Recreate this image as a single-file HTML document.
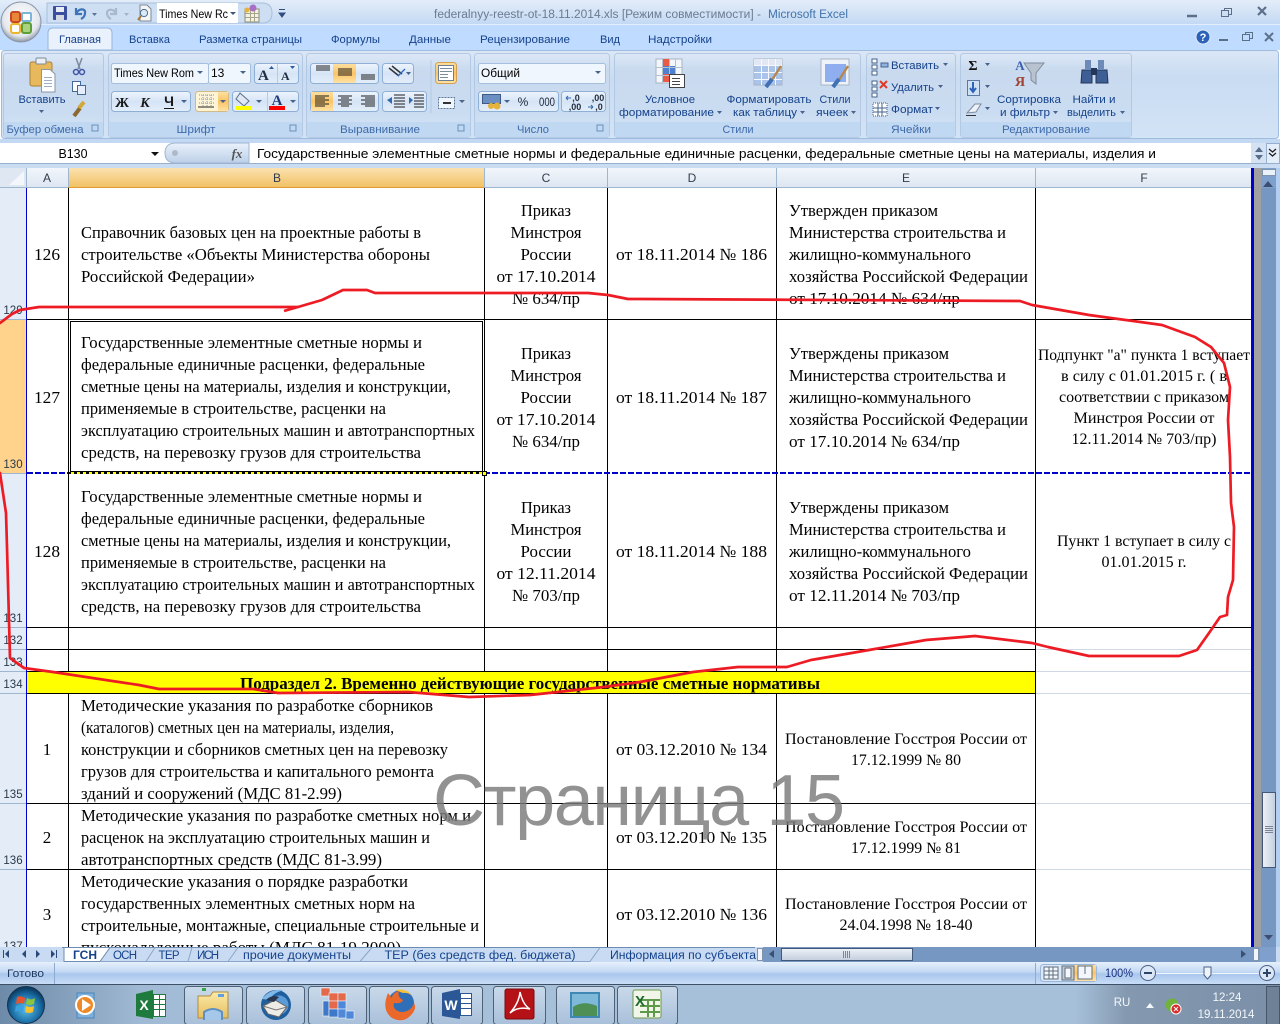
<!DOCTYPE html>
<html><head><meta charset="utf-8"><style>
html,body{margin:0;padding:0;background:#fff;width:1280px;height:1024px;overflow:hidden}
svg{display:block}
.c{font:17px "Liberation Serif","Noto Serif CJK SC",serif;fill:#000}
.s{font-size:15.5px}
.m{text-anchor:middle}
.u{font:11px "Liberation Sans","Noto Sans CJK SC",sans-serif;fill:#15428b}
.g{font:11px "Liberation Sans",sans-serif;fill:#3e6aaa;text-anchor:middle}
.h{font:12px "Liberation Sans",sans-serif;fill:#303c4c;text-anchor:middle}
.r{font:11.5px "Liberation Sans",sans-serif;fill:#2a3a4a;text-anchor:middle}
.w{font:11.5px "Liberation Sans",sans-serif;fill:#f4f7fb;text-anchor:middle}
</style></head><body>
<svg width="1280" height="1024" viewBox="0 0 1280 1024" xmlns="http://www.w3.org/2000/svg">
<defs>
<linearGradient id="tb" x1="0" y1="0" x2="0" y2="1"><stop offset="0" stop-color="#e3edf9"/><stop offset=".5" stop-color="#d3e3f6"/><stop offset="1" stop-color="#c2d8f3"/></linearGradient>
<linearGradient id="pn" x1="0" y1="0" x2="0" y2="1"><stop offset="0" stop-color="#dbe7f6"/><stop offset=".3" stop-color="#c9dcf2"/><stop offset="1" stop-color="#d3e3f6"/></linearGradient>
<linearGradient id="gp" x1="0" y1="0" x2="0" y2="1"><stop offset="0" stop-color="#dce8f7"/><stop offset=".2" stop-color="#c9daef"/><stop offset=".7" stop-color="#cadcf1"/><stop offset="1" stop-color="#d6e5f7"/></linearGradient>
<linearGradient id="bt" x1="0" y1="0" x2="0" y2="1"><stop offset="0" stop-color="#eef5fd"/><stop offset=".5" stop-color="#d5e4f6"/><stop offset="1" stop-color="#e4eefa"/></linearGradient>
<linearGradient id="or" x1="0" y1="0" x2="0" y2="1"><stop offset="0" stop-color="#fddf9f"/><stop offset=".5" stop-color="#fbc464"/><stop offset="1" stop-color="#fee3a6"/></linearGradient>
<linearGradient id="hd" x1="0" y1="0" x2="0" y2="1"><stop offset="0" stop-color="#f2f6fb"/><stop offset="1" stop-color="#dde6f2"/></linearGradient>
<linearGradient id="hs" x1="0" y1="0" x2="0" y2="1"><stop offset="0" stop-color="#fbe2b0"/><stop offset="1" stop-color="#f2c165"/></linearGradient>
<linearGradient id="st" x1="0" y1="0" x2="0" y2="1"><stop offset="0" stop-color="#e6f0fc"/><stop offset=".45" stop-color="#c3d9f5"/><stop offset=".55" stop-color="#a9c6ec"/><stop offset="1" stop-color="#c9def7"/></linearGradient>
<linearGradient id="tk" x1="0" y1="0" x2="1" y2="0"><stop offset="0" stop-color="#6d8aa8"/><stop offset=".11" stop-color="#a0b9d4"/><stop offset=".2" stop-color="#a7c0da"/><stop offset=".84" stop-color="#a7c0da"/><stop offset=".88" stop-color="#8499b0"/><stop offset="1" stop-color="#7b90a8"/></linearGradient>
<linearGradient id="tbn" x1="0" y1="0" x2="0" y2="1"><stop offset="0" stop-color="#c9d9ea"/><stop offset="1" stop-color="#a9c0da"/></linearGradient>
<linearGradient id="thm" x1="0" y1="0" x2="0" y2="1"><stop offset="0" stop-color="#eef2f7"/><stop offset="1" stop-color="#c2cede"/></linearGradient>
<linearGradient id="thv" x1="0" y1="0" x2="1" y2="0"><stop offset="0" stop-color="#eef2f7"/><stop offset="1" stop-color="#c2cede"/></linearGradient>
<radialGradient id="orb" cx=".5" cy=".6" r=".55"><stop offset="0" stop-color="#5fc0e8"/><stop offset=".7" stop-color="#1a6ea6"/><stop offset="1" stop-color="#0c3e66"/></radialGradient>
<radialGradient id="off" cx=".5" cy=".4" r=".6"><stop offset="0" stop-color="#ffffff"/><stop offset=".75" stop-color="#e4e8ee"/><stop offset="1" stop-color="#8d97a6"/></radialGradient>
<linearGradient id="fx" x1="0" y1="0" x2="0" y2="1"><stop offset="0" stop-color="#e9f1fb"/><stop offset="1" stop-color="#bdd0e8"/></linearGradient>
<linearGradient id="fold" x1="0" y1="0" x2="0" y2="1"><stop offset="0" stop-color="#fbeaa6"/><stop offset="1" stop-color="#e6bf62"/></linearGradient>
</defs>

<!-- TITLE BAR -->
<rect width="1280" height="25" fill="url(#tb)"/>
<rect y="25" width="1280" height="25" fill="#bfdbff"/>
<rect y="24" width="1280" height="1" fill="#e4eefb"/>
<path d="M47 3H262Q272 3 272 13Q272 23 262 23H47Z" fill="#cfdff3" stroke="#a7bfdc"/>
<rect x="157" y="3" width="81" height="20" fill="#fff"/>
<circle cx="21" cy="22" r="20" fill="url(#off)" stroke="#8a95a6"/>
<rect x="11" y="12" width="9" height="10" rx="2" fill="#e8873a" stroke="#c9481f" stroke-width="2"/>
<rect x="22" y="13" width="9" height="8" rx="1" fill="#fff" stroke="#7bb5d8" stroke-width="2"/>
<rect x="11" y="24" width="9" height="9" rx="2" fill="#fff" stroke="#eeb42c" stroke-width="2"/>
<rect x="22" y="23" width="9" height="10" rx="2" fill="#a9d37c" stroke="#5e9e3a" stroke-width="2"/>
<!-- QAT -->
<rect x="53" y="6" width="14" height="14" rx="1" fill="#3b4f9e"/><rect x="56" y="7" width="8" height="5" fill="#e8eef8"/><rect x="56" y="15" width="8" height="5" fill="#d4d8e0"/>
<path d="M76 8V14H82M76 14C78 8 86 8 85 13C85 16 83 18 81 19" fill="none" stroke="#3d73b8" stroke-width="2.200"/>
<polygon points="92,13 97,13 94.500,16" fill="#5a7396"/>
<path d="M116 8V14H110M116 14C114 8 107 9 107 13C107 16 109 18 111 19" fill="none" stroke="#a9b8cb" stroke-width="2.200"/>
<polygon points="124,13 129,13 126.500,16" fill="#a3b3c7"/>
<path d="M140 5H147L151 9V21H140Z" fill="#f6f6f4" stroke="#7d8a9a"/><circle cx="144" cy="13" r="3.600" fill="#d9eaf8" stroke="#4f6d90"/><path d="M141 16L138 20" stroke="#a87b3b" stroke-width="2"/>
<text x="159" y="18" class="u" style="fill:#000;font-size:12px" textLength="69" lengthAdjust="spacingAndGlyphs">Times New Rc</text>
<polygon points="230,12 236,12 233,15" fill="#3c5879"/>
<rect x="245" y="9" width="14" height="13" fill="#f4f1e4" stroke="#8a8d76"/><path d="M245.500 13.500H259M245.500 17.500H259M250.500 9V22M254.500 9V22" stroke="#a5a58a"/><circle cx="253" cy="8" r="3.500" fill="#a86fc4"/><circle cx="247" cy="10" r="2.500" fill="#e6b23c"/>
<path d="M279 9.500H285M279 13L285 13 282 17Z" stroke="#2f4f7f" fill="#2f4f7f"/>
<text x="434" y="18" class="u" style="fill:#6a7b92;font-size:11.500px" textLength="327" lengthAdjust="spacingAndGlyphs">federalnyy-reestr-ot-18.11.2014.xls  [Режим совместимости] -</text>
<text x="768" y="18" class="u" style="fill:#3f73ad;font-size:11.500px" textLength="80" lengthAdjust="spacingAndGlyphs">Microsoft Excel</text>
<path d="M1187 16H1197" stroke="#5c6f89" stroke-width="2.500"/>
<rect x="1224.500" y="8.500" width="7" height="6" fill="none" stroke="#5c6f89"/><rect x="1221.500" y="10.500" width="7" height="6" fill="#cfdff3" stroke="#5c6f89"/>
<path d="M1258 7L1266 15M1266 7L1258 15" stroke="#5c6f89" stroke-width="2.200"/>
<!-- TABS -->
<path d="M48 50V33Q48 28 53 28H107Q112 28 112 33V50Z" fill="#e8f1fc" stroke="#98b5d9"/>
<text x="59" y="43" class="u" textLength="42" lengthAdjust="spacingAndGlyphs">Главная</text>
<text x="129" y="43" class="u" textLength="41" lengthAdjust="spacingAndGlyphs">Вставка</text>
<text x="199" y="43" class="u" textLength="103" lengthAdjust="spacingAndGlyphs">Разметка страницы</text>
<text x="331" y="43" class="u" textLength="49" lengthAdjust="spacingAndGlyphs">Формулы</text>
<text x="409" y="43" class="u" textLength="42" lengthAdjust="spacingAndGlyphs">Данные</text>
<text x="480" y="43" class="u" textLength="90" lengthAdjust="spacingAndGlyphs">Рецензирование</text>
<text x="600" y="43" class="u" textLength="20" lengthAdjust="spacingAndGlyphs">Вид</text>
<text x="648" y="43" class="u" textLength="64" lengthAdjust="spacingAndGlyphs">Надстройки</text>
<circle cx="1203" cy="37" r="7" fill="#2c62b8" stroke="#dfeafa"/><text x="1203" y="41" class="u" style="fill:#fff;font-weight:bold;text-anchor:middle">?</text>
<path d="M1219 40H1228" stroke="#5c6f89" stroke-width="2"/>
<rect x="1245.500" y="32.500" width="7" height="6" fill="none" stroke="#5c6f89"/><rect x="1242.500" y="34.500" width="7" height="6" fill="#bfdbff" stroke="#5c6f89"/>
<path d="M1265 33L1273 41M1273 33L1265 41" stroke="#5c6f89" stroke-width="2"/>
<!-- RIBBON -->
<rect x="1.500" y="50.500" width="1277" height="88" rx="3" fill="url(#pn)" stroke="#9fbcdf"/>
<rect x="0" y="139" width="1280" height="4" fill="#c2d8f3"/>
<g fill="url(#gp)" stroke="#b3c9e3">
<rect x="3.500" y="53.500" width="100" height="84" rx="3"/><rect x="108.500" y="53.500" width="194" height="84" rx="3"/><rect x="306.500" y="53.500" width="164" height="84" rx="3"/><rect x="474.500" y="53.500" width="135" height="84" rx="3"/><rect x="614.500" y="53.500" width="246" height="84" rx="3"/><rect x="866.500" y="53.500" width="89" height="84" rx="3"/><rect x="960.500" y="53.500" width="171" height="84" rx="3"/>
</g>
<g fill="#c1d8f2">
<rect x="4" y="122" width="99" height="15"/><rect x="109" y="122" width="193" height="15"/><rect x="307" y="122" width="163" height="15"/><rect x="475" y="122" width="134" height="15"/><rect x="615" y="122" width="245" height="15"/><rect x="867" y="122" width="88" height="15"/><rect x="961" y="122" width="170" height="15"/>
</g>
<text x="45" y="133" class="g" textLength="77" lengthAdjust="spacingAndGlyphs">Буфер обмена</text>
<text x="196" y="133" class="g" textLength="39" lengthAdjust="spacingAndGlyphs">Шрифт</text>
<text x="380" y="133" class="g" textLength="80" lengthAdjust="spacingAndGlyphs">Выравнивание</text>
<text x="533" y="133" class="g" textLength="32" lengthAdjust="spacingAndGlyphs">Число</text>
<text x="738" y="133" class="g" textLength="31" lengthAdjust="spacingAndGlyphs">Стили</text>
<text x="911" y="133" class="g" textLength="40" lengthAdjust="spacingAndGlyphs">Ячейки</text>
<text x="1046" y="133" class="g" textLength="88" lengthAdjust="spacingAndGlyphs">Редактирование</text>
<g fill="none" stroke="#6b8fb8" shape-rendering="crispEdges"><rect x="92" y="125" width="6" height="6"/><rect x="290" y="125" width="6" height="6"/><rect x="458" y="125" width="6" height="6"/><rect x="597" y="125" width="6" height="6"/></g>
<!-- clipboard -->
<rect x="30" y="62" width="22" height="24" rx="2" fill="#e8b85c" stroke="#a98238"/><rect x="36" y="58" width="10" height="6" rx="1" fill="#eceff3" stroke="#7d8a9a"/>
<path d="M41.500 69.500H50L55 74V92H41.500Z" fill="#fff" stroke="#8896a8"/><path d="M44 77.500H52M44 80.500H52M44 83.500H52M44 86.500H52" stroke="#9cb0c6"/>
<text x="42" y="103" class="u m" textLength="47" lengthAdjust="spacingAndGlyphs">Вставить</text>
<polygon points="39,110 44,110 41.500,113" fill="#47638b"/>
<path d="M76 58L80 69M82 58L78 69" stroke="#7a8ba0" stroke-width="1.500"/><circle cx="76" cy="72" r="2.500" fill="none" stroke="#3c55a8" stroke-width="1.500"/><circle cx="82" cy="72" r="2.500" fill="none" stroke="#3c55a8" stroke-width="1.500"/>
<rect x="72.500" y="81.500" width="8" height="10" fill="#fff" stroke="#46699c"/><rect x="77.500" y="85.500" width="8" height="9" fill="#e6eefb" stroke="#46699c"/>
<path d="M74 116L80 108" stroke="#8c6a32" stroke-width="4"/><path d="M79 108L84 102" stroke="#d2a83a" stroke-width="4"/>
<!-- control boxes -->
<g fill="url(#bt)" stroke="#8fb0d6">
<rect x="111.500" y="63.500" width="97" height="20" rx="2" fill="#f0f6fd" stroke="#a6bfdc"/><rect x="208.500" y="63.500" width="42" height="20" rx="2" fill="#f0f6fd" stroke="#a6bfdc"/><rect x="254.500" y="63.500" width="44" height="20" rx="3"/>
<rect x="111.500" y="91.500" width="79" height="20" rx="3"/><rect x="232.500" y="91.500" width="66" height="20" rx="3"/>
<rect x="310.500" y="63.500" width="68" height="20" rx="3"/><rect x="382.500" y="63.500" width="31" height="20" rx="3"/><rect x="310.500" y="91.500" width="68" height="20" rx="3"/><rect x="382.500" y="91.500" width="44" height="20" rx="3"/>
<rect x="478.500" y="63.500" width="127" height="20" rx="2" fill="#f0f6fd" stroke="#a6bfdc"/><rect x="478.500" y="91.500" width="80" height="20" rx="3"/><rect x="561.500" y="91.500" width="44" height="20" rx="3"/>
</g>
<text x="114" y="77" class="u" style="fill:#000;font-size:12px" textLength="80" lengthAdjust="spacingAndGlyphs">Times New Rom</text>
<polygon points="197,71 203,71 200,74" fill="#47638b"/>
<text x="211" y="77" class="u" style="fill:#000;font-size:12px">13</text>
<polygon points="240,71 246,71 243,74" fill="#47638b"/>
<text x="258" y="80" style="font:bold 15px 'Liberation Serif',serif;fill:#1e2d44">A</text><polygon points="269,69 274,69 271.500,66" fill="#2b5ba2"/>
<text x="281" y="80" style="font:bold 12px 'Liberation Serif',serif;fill:#1e2d44">A</text><polygon points="290,66 295,66 292.500,69" fill="#2b5ba2"/>
<path d="M277.500 64V83" stroke="#b5cae3"/>
<text x="122" y="107" class="m" style="font:bold 14px 'Liberation Serif',serif;fill:#1a1a1a">Ж</text>
<text x="145" y="107" class="m" style="font:italic bold 14px 'Liberation Serif',serif;fill:#1a1a1a">К</text>
<text x="169" y="106" class="m" style="font:bold 14px 'Liberation Sans',sans-serif;fill:#1a1a1a">Ч</text>
<path d="M164 108.500H174" stroke="#1a1a1a"/>
<polygon points="181,100 187,100 184,103" fill="#47638b"/>
<rect x="195.500" y="91.500" width="33" height="20" rx="3" fill="#fff4d6" stroke="#d2ba86"/><rect x="218" y="92" width="10" height="19" fill="url(#or)"/>
<g shape-rendering="crispEdges"><path d="M199 95H214M199 99H214M199 103H214M203 95V107M207 95V107M211 95V107" stroke="#8a96a6" stroke-dasharray="1 1"/><path d="M198 107H214" stroke="#222"/></g>
<polygon points="220,100 226,100 223,103" fill="#47638b"/>
<path d="M240 93L249 101L244 106L236 99Z" fill="#dfe7f2" stroke="#5b6f8a"/>
<rect x="236" y="106" width="16" height="4" fill="#ffff00"/>
<polygon points="256,100 262,100 259,103" fill="#47638b"/>
<text x="277" y="105" class="m" style="font:bold 15px 'Liberation Serif',serif;fill:#1f3a7a">A</text>
<rect x="269" y="106" width="16" height="4" fill="#ff0000"/>
<polygon points="290,100 296,100 293,103" fill="#47638b"/>
<path d="M267.500 92V111" stroke="#b5cae3"/>
<!-- align -->
<rect x="333" y="64" width="23" height="19" fill="url(#or)"/>
<rect x="311" y="92" width="22" height="19" fill="url(#or)"/>
<g stroke="#1e1e1e" shape-rendering="crispEdges">
<path d="M316 66H330M316 68H330M316 70H330"/>
<path d="M338 69H352M338 71H352M338 73H352M338 75H352"/>
<path d="M361 75H375M361 77H375M361 79H375"/>
<path d="M315 96H329M315 98H325M315 100H329M315 102H325M315 104H329M315 106H325"/>
<path d="M338 96H352M341 98H349M338 100H352M341 102H349M338 104H352M341 106H349"/>
<path d="M361 96H375M365 98H375M361 100H375M365 102H375M361 104H375M365 106H375"/>
<path d="M394 95H405M394 98H405M394 101H405M394 104H405M394 107H405"/>
<path d="M414 95H424M414 98H424M414 101H424M414 104H424M414 107H424"/>
</g>
<path d="M389 68L399 76M392 66L402 74" stroke="#333" stroke-width="1.500"/><path d="M398 76L405 69" stroke="#2e6bc0" stroke-width="1.300"/>
<polygon points="406,72 411,72 408.500,75" fill="#47638b"/>
<path d="M387 100L392 97V104ZM409 97L413 100 409 104Z" fill="#3568ad"/>
<path d="M431 60V113" stroke="#b3c9e3"/>
<rect x="435.500" y="62.500" width="21" height="21" rx="3" fill="url(#or)" stroke="#d2a04f"/><rect x="438.500" y="65.500" width="15" height="15" fill="#fff" stroke="#6d7f94"/><path d="M440 68.500H452M440 71.500H452M440 74.500H448M440 77.500H448" stroke="#7d8a9a"/>
<rect x="438.500" y="97.500" width="16" height="11" fill="#f0f6fd" stroke="#5e7897" stroke-dasharray="2 1"/><path d="M443 103H451" stroke="#333" stroke-width="2"/>
<polygon points="459,100 465,100 462,103" fill="#47638b"/>
<!-- number -->
<text x="481" y="77" class="u" style="fill:#000;font-size:12px" textLength="39" lengthAdjust="spacingAndGlyphs">Общий</text>
<polygon points="595,71 601,71 598,74" fill="#47638b"/>
<rect x="482.500" y="94.500" width="18" height="9" fill="#6a8fc0" stroke="#3d5a88"/><circle cx="497" cy="106" r="3.500" fill="#e5b23c"/><circle cx="491" cy="106" r="3" fill="#e5b23c"/>
<polygon points="504,100 510,100 507,103" fill="#47638b"/>
<text x="523" y="106" class="m" style="font:12px 'Liberation Sans',sans-serif;fill:#1f2a3a">%</text>
<text x="547" y="106" class="m" style="font:12px 'Liberation Sans',sans-serif;fill:#1f2a3a" textLength="16" lengthAdjust="spacingAndGlyphs">000</text>
<text x="576" y="101" class="m" style="font:bold 9px 'Liberation Sans',sans-serif;fill:#1f2a3a">,0</text><text x="575" y="110" class="m" style="font:bold 9px 'Liberation Sans',sans-serif;fill:#1f2a3a">,00</text>
<text x="598" y="101" class="m" style="font:bold 9px 'Liberation Sans',sans-serif;fill:#1f2a3a">,00</text><text x="599" y="110" class="m" style="font:bold 9px 'Liberation Sans',sans-serif;fill:#1f2a3a">,0</text>
<path d="M566 98H571M566 98L568 96M566 98L568 100" stroke="#3568ad"/><path d="M588 107H593M593 107L591 105M593 107L591 109" stroke="#3568ad"/>
<!-- styles -->
<rect x="656" y="59" width="26" height="24" fill="#f3f6fa" stroke="#a8b4c4"/><rect x="662" y="59" width="7" height="8" fill="#ea5a45"/><rect x="662" y="66" width="13" height="8" fill="#4f81d0"/><rect x="662" y="74" width="7" height="8" fill="#ea5a45"/>
<path d="M656 67.500H682M656 75.500H682M662.500 59V83M669.500 59V83M675.500 59V83" stroke="#b5c0cf"/><rect x="669.500" y="74.500" width="15" height="13" fill="#fff" stroke="#444"/><path d="M672 78.500H680M672 81.500H680M672 84.500H680" stroke="#444"/>
<text x="670" y="103" class="u m" textLength="50" lengthAdjust="spacingAndGlyphs">Условное</text>
<text x="619" y="116" class="u" textLength="95" lengthAdjust="spacingAndGlyphs">форматирование</text><polygon points="717,111 722,111 719.500,114" fill="#47638b"/>
<rect x="754" y="59" width="28" height="26" fill="#a9c3eb" stroke="#a8b4c4"/><rect x="754" y="59" width="28" height="6" fill="#e1e8f3"/><path d="M754 65.500H782M754 72.500H782M754 79.500H782M761.500 59V85M768.500 59V85M775.500 59V85" stroke="#f5f8fc"/>
<path d="M770 83L781 66" stroke="#b48a4c" stroke-width="2.500"/><path d="M766 87L772 79" stroke="#3f71b5" stroke-width="4"/>
<text x="769" y="103" class="u m" textLength="85" lengthAdjust="spacingAndGlyphs">Форматировать</text>
<text x="733" y="116" class="u" textLength="64" lengthAdjust="spacingAndGlyphs">как таблицу</text><polygon points="800,111 805,111 802.500,114" fill="#47638b"/>
<rect x="821" y="59" width="28" height="26" fill="#eef3fa" stroke="#a8b4c4"/><rect x="825" y="64" width="21" height="18" fill="#8eaef0"/>
<path d="M837 83L848 66" stroke="#b48a4c" stroke-width="2.500"/><path d="M833 87L839 79" stroke="#3f71b5" stroke-width="4"/>
<text x="835" y="103" class="u m" textLength="31" lengthAdjust="spacingAndGlyphs">Стили</text>
<text x="816" y="116" class="u" textLength="32" lengthAdjust="spacingAndGlyphs">ячеек</text><polygon points="851,111 856,111 853.500,114" fill="#47638b"/>
<!-- cells -->
<g fill="#fff" stroke="#46638c" shape-rendering="crispEdges"><rect x="872" y="59" width="5" height="4"/><rect x="872" y="65" width="5" height="4"/><rect x="872" y="71" width="5" height="4"/><rect x="881" y="63" width="7" height="4" fill="#8fb3e0"/>
<rect x="872" y="81" width="5" height="4"/><rect x="872" y="87" width="5" height="4"/><rect x="872" y="93" width="5" height="4"/>
<rect x="873" y="103" width="14" height="13" stroke-dasharray="1 1"/><path d="M878 103V116M882 103V116M873 108H887M873 112H887"/></g>
<path d="M880 81L887 88M887 81L880 88" stroke="#e03a2a" stroke-width="2"/>
<text x="891" y="69" class="u" textLength="48" lengthAdjust="spacingAndGlyphs">Вставить</text><polygon points="943,63 948,63 945.500,66" fill="#47638b"/>
<text x="891" y="91" class="u" textLength="43" lengthAdjust="spacingAndGlyphs">Удалить</text><polygon points="938,85 943,85 940.500,88" fill="#47638b"/>
<text x="891" y="113" class="u" textLength="42" lengthAdjust="spacingAndGlyphs">Формат</text><polygon points="935,107 940,107 937.500,110" fill="#47638b"/>
<!-- editing -->
<text x="973" y="70" class="m" style="font:bold 14px 'Liberation Serif',serif;fill:#111">Σ</text><polygon points="985,63 990,63 987.500,66" fill="#47638b"/>
<rect x="967.500" y="80.500" width="12" height="15" fill="#cfe0f5" stroke="#5a7aa5"/><path d="M973 82V91M970 88L973 92 976 88" stroke="#2d64b8" stroke-width="2" fill="none"/><polygon points="985,85 990,85 987.500,88" fill="#47638b"/>
<path d="M967 113L975 104H981L976 112Z" fill="#eef2f7" stroke="#7f8da0"/><path d="M966 115.500H976" stroke="#333"/><polygon points="985,107 990,107 987.500,110" fill="#47638b"/>
<path d="M1024 63H1044L1036 73V84L1031 80V73Z" fill="#b8c3cf" stroke="#7f8d9c"/>
<text x="1020" y="70" class="m" style="font:bold 13px 'Liberation Serif',serif;fill:#3a5fb0">A</text>
<text x="1020" y="86" class="m" style="font:bold 14px 'Liberation Serif',serif;fill:#a04030">Я</text>
<text x="1029" y="103" class="u m" textLength="64" lengthAdjust="spacingAndGlyphs">Сортировка</text>
<text x="1000" y="116" class="u" textLength="50" lengthAdjust="spacingAndGlyphs">и фильтр</text><polygon points="1053,111 1058,111 1055.500,114" fill="#47638b"/>
<path d="M1082 70H1092V83H1081ZM1096 70H1107L1108 83H1096Z" fill="#3e5f96" stroke="#22365a"/><rect x="1085" y="60" width="6" height="10" fill="#6e8ab8"/><rect x="1098" y="60" width="6" height="10" fill="#6e8ab8"/><rect x="1091" y="68" width="6" height="7" fill="#24375a"/>
<text x="1094" y="103" class="u m" textLength="43" lengthAdjust="spacingAndGlyphs">Найти и</text>
<text x="1067" y="116" class="u" textLength="49" lengthAdjust="spacingAndGlyphs">выделить</text><polygon points="1120,111 1125,111 1122.500,114" fill="#47638b"/>

<!-- FORMULA BAR -->
<rect y="143" width="1280" height="25" fill="#c9dcf2"/>
<rect y="143" width="1280" height="20" fill="#fff"/>
<rect y="163" width="1280" height="1" fill="#97afcd"/>
<text x="73" y="158" class="u m" style="fill:#000;font-size:12.500px" textLength="29" lengthAdjust="spacingAndGlyphs">B130</text>
<polygon points="151,152 159,152 155,156" fill="#111"/>
<path d="M249 143H176Q165 143 165 153Q165 163 176 163H249Z" fill="url(#fx)" stroke="#9fb6d3"/>
<circle cx="175" cy="153" r="3" fill="#aeb9c6"/>
<text x="237" y="158" class="m" style="font:italic bold 13px 'Liberation Serif',serif;fill:#555">fx</text>
<text x="257" y="158" class="u" style="fill:#000;font-size:13px" textLength="899" lengthAdjust="spacingAndGlyphs">Государственные элементные сметные нормы и федеральные единичные расценки, федеральные сметные цены на материалы, изделия и</text>
<rect x="1251" y="143" width="16" height="20" fill="#d5e2f3"/><polygon points="1255,152 1263,152 1259,147" fill="#5a6d88"/><polygon points="1255,155 1263,155 1259,160" fill="#5a6d88"/>
<rect x="1266.500" y="143.500" width="13" height="20" fill="#e4eefb" stroke="#97afcd"/><path d="M1269 149L1272.500 152L1276 149M1269 153L1272.500 156L1276 153" stroke="#222" fill="none" stroke-width="1.300"/>

<!-- SHEET -->
<rect x="0" y="168" width="1280" height="780" fill="#fff"/>
<rect x="0" y="168" width="26" height="19" fill="#dfe7f2"/><polygon points="9,185 24,185 24,171" fill="#f3f6fa"/>
<rect x="27" y="168" width="1225" height="19" fill="url(#hd)"/>
<rect x="68" y="168" width="416" height="19" fill="url(#hs)"/>
<g stroke="#9eb6ce"><path d="M0 187.500H1253M26.500 168V187M68.500 168V187M484.500 168V187M607.500 168V187M776.500 168V187M1035.500 168V187"/></g>
<path d="M68 187.500H484" stroke="#e29a36"/>
<text x="47" y="182" class="h">A</text><text x="277" y="182" class="h">B</text><text x="546" y="182" class="h">C</text><text x="692" y="182" class="h">D</text><text x="906" y="182" class="h">E</text><text x="1144" y="182" class="h">F</text>
<!-- row headers -->
<rect x="0" y="188" width="26" height="760" fill="#e4ecf7"/>
<rect x="0" y="320" width="26" height="153" fill="#ffd38c"/>
<path d="M0 319.500H26M0 473.500H26M0 627.500H26M0 649.500H26M0 671.500H26M0 693.500H26M0 803.500H26M0 869.500H26" stroke="#9eb6ce"/>
<text x="13" y="314" class="r">129</text><text x="13" y="468" class="r">130</text><text x="13" y="622" class="r">131</text><text x="13" y="644" class="r">132</text><text x="13" y="666" class="r">133</text><text x="13" y="688" class="r">134</text><text x="13" y="798" class="r">135</text><text x="13" y="864" class="r">136</text><text x="13" y="950" class="r">137</text>
<!-- yellow -->
<rect x="27" y="672" width="1008" height="21" fill="#ffff00"/>
<!-- F col grid -->
<path d="M1035 649.500H1251M1035 671.500H1251M1035 693.500H1251M1035 803.500H1251M1035 869.500H1251" stroke="#d0d7e5"/>
<!-- black grid -->
<g stroke="#000">
<path d="M27 319.500H1251M27 627.500H1251M27 649.500H1035M27 671.500H1035M27 693.500H1035M27 803.500H1035M27 869.500H1035"/>
<path d="M68.500 188V671M484.500 188V671M607.500 188V671M776.500 188V671M1035.500 188V693M68.500 693V947M484.500 693V947M607.500 693V947M776.500 693V947M1035.500 693V947"/>
</g>
<!-- text -->
<text x="47" y="260" class="c m" textLength="26" lengthAdjust="spacingAndGlyphs">126</text>
<text x="81" y="238" class="c" textLength="340" lengthAdjust="spacingAndGlyphs">Справочник базовых цен на проектные работы в</text>
<text x="81" y="260" class="c" textLength="349" lengthAdjust="spacingAndGlyphs">строительстве «Объекты Министерства обороны</text>
<text x="81" y="282" class="c" textLength="174" lengthAdjust="spacingAndGlyphs">Российской Федерации»</text>
<text x="546" y="216" class="c m" textLength="50" lengthAdjust="spacingAndGlyphs">Приказ</text><text x="546" y="238" class="c m" textLength="71" lengthAdjust="spacingAndGlyphs">Минстроя</text><text x="546" y="260" class="c m" textLength="51" lengthAdjust="spacingAndGlyphs">России</text><text x="546" y="282" class="c m" textLength="99" lengthAdjust="spacingAndGlyphs">от 17.10.2014</text><text x="546" y="304" class="c m" textLength="68" lengthAdjust="spacingAndGlyphs">№ 634/пр</text>
<text x="691.500" y="260" class="c m" textLength="151" lengthAdjust="spacingAndGlyphs">от 18.11.2014 № 186</text>
<text x="789" y="216" class="c" textLength="149" lengthAdjust="spacingAndGlyphs">Утвержден приказом</text><text x="789" y="238" class="c" textLength="217" lengthAdjust="spacingAndGlyphs">Министерства строительства и</text><text x="789" y="260" class="c" textLength="182" lengthAdjust="spacingAndGlyphs">жилищно-коммунального</text><text x="789" y="282" class="c" textLength="239" lengthAdjust="spacingAndGlyphs">хозяйства Российской Федерации</text><text x="789" y="304" class="c" textLength="171" lengthAdjust="spacingAndGlyphs">от 17.10.2014 № 634/пр</text>

<text x="47" y="403" class="c m" textLength="26" lengthAdjust="spacingAndGlyphs">127</text>
<text x="81" y="348" class="c" textLength="341" lengthAdjust="spacingAndGlyphs">Государственные элементные сметные нормы и</text>
<text x="81" y="370" class="c" textLength="344" lengthAdjust="spacingAndGlyphs">федеральные единичные расценки, федеральные</text>
<text x="81" y="392" class="c" textLength="370" lengthAdjust="spacingAndGlyphs">сметные цены на материалы, изделия и конструкции,</text>
<text x="81" y="414" class="c" textLength="305" lengthAdjust="spacingAndGlyphs">применяемые в строительстве, расценки на</text>
<text x="81" y="436" class="c" textLength="394" lengthAdjust="spacingAndGlyphs">эксплуатацию строительных машин и автотранспортных</text>
<text x="81" y="458" class="c" textLength="340" lengthAdjust="spacingAndGlyphs">средств, на перевозку грузов для строительства</text>
<text x="546" y="359" class="c m" textLength="50" lengthAdjust="spacingAndGlyphs">Приказ</text><text x="546" y="381" class="c m" textLength="71" lengthAdjust="spacingAndGlyphs">Минстроя</text><text x="546" y="403" class="c m" textLength="51" lengthAdjust="spacingAndGlyphs">России</text><text x="546" y="425" class="c m" textLength="99" lengthAdjust="spacingAndGlyphs">от 17.10.2014</text><text x="546" y="447" class="c m" textLength="68" lengthAdjust="spacingAndGlyphs">№ 634/пр</text>
<text x="691.500" y="403" class="c m" textLength="151" lengthAdjust="spacingAndGlyphs">от 18.11.2014 № 187</text>
<text x="789" y="359" class="c" textLength="160" lengthAdjust="spacingAndGlyphs">Утверждены приказом</text><text x="789" y="381" class="c" textLength="217" lengthAdjust="spacingAndGlyphs">Министерства строительства и</text><text x="789" y="403" class="c" textLength="182" lengthAdjust="spacingAndGlyphs">жилищно-коммунального</text><text x="789" y="425" class="c" textLength="239" lengthAdjust="spacingAndGlyphs">хозяйства Российской Федерации</text><text x="789" y="447" class="c" textLength="171" lengthAdjust="spacingAndGlyphs">от 17.10.2014 № 634/пр</text>
<text x="1144" y="360" class="c s m" textLength="212" lengthAdjust="spacingAndGlyphs">Подпункт "а" пункта 1 вступает</text><text x="1144" y="381" class="c s m" textLength="166" lengthAdjust="spacingAndGlyphs">в силу с 01.01.2015 г. ( в</text><text x="1144" y="402" class="c s m" textLength="170" lengthAdjust="spacingAndGlyphs">соответствии с приказом</text><text x="1144" y="423" class="c s m" textLength="141" lengthAdjust="spacingAndGlyphs">Минстроя России от</text><text x="1144" y="444" class="c s m" textLength="145" lengthAdjust="spacingAndGlyphs">12.11.2014 № 703/пр)</text>

<text x="47" y="557" class="c m" textLength="26" lengthAdjust="spacingAndGlyphs">128</text>
<text x="81" y="502" class="c" textLength="341" lengthAdjust="spacingAndGlyphs">Государственные элементные сметные нормы и</text>
<text x="81" y="524" class="c" textLength="344" lengthAdjust="spacingAndGlyphs">федеральные единичные расценки, федеральные</text>
<text x="81" y="546" class="c" textLength="370" lengthAdjust="spacingAndGlyphs">сметные цены на материалы, изделия и конструкции,</text>
<text x="81" y="568" class="c" textLength="305" lengthAdjust="spacingAndGlyphs">применяемые в строительстве, расценки на</text>
<text x="81" y="590" class="c" textLength="394" lengthAdjust="spacingAndGlyphs">эксплуатацию строительных машин и автотранспортных</text>
<text x="81" y="612" class="c" textLength="340" lengthAdjust="spacingAndGlyphs">средств, на перевозку грузов для строительства</text>
<text x="546" y="513" class="c m" textLength="50" lengthAdjust="spacingAndGlyphs">Приказ</text><text x="546" y="535" class="c m" textLength="71" lengthAdjust="spacingAndGlyphs">Минстроя</text><text x="546" y="557" class="c m" textLength="51" lengthAdjust="spacingAndGlyphs">России</text><text x="546" y="579" class="c m" textLength="99" lengthAdjust="spacingAndGlyphs">от 12.11.2014</text><text x="546" y="601" class="c m" textLength="68" lengthAdjust="spacingAndGlyphs">№ 703/пр</text>
<text x="691.500" y="557" class="c m" textLength="151" lengthAdjust="spacingAndGlyphs">от 18.11.2014 № 188</text>
<text x="789" y="513" class="c" textLength="160" lengthAdjust="spacingAndGlyphs">Утверждены приказом</text><text x="789" y="535" class="c" textLength="217" lengthAdjust="spacingAndGlyphs">Министерства строительства и</text><text x="789" y="557" class="c" textLength="182" lengthAdjust="spacingAndGlyphs">жилищно-коммунального</text><text x="789" y="579" class="c" textLength="239" lengthAdjust="spacingAndGlyphs">хозяйства Российской Федерации</text><text x="789" y="601" class="c" textLength="171" lengthAdjust="spacingAndGlyphs">от 12.11.2014 № 703/пр</text>
<text x="1144" y="546" class="c s m" textLength="174" lengthAdjust="spacingAndGlyphs">Пункт 1 вступает в силу с</text><text x="1144" y="567" class="c s m" textLength="85" lengthAdjust="spacingAndGlyphs">01.01.2015 г.</text>

<text x="530" y="689" class="c m" style="font-weight:bold" textLength="580" lengthAdjust="spacingAndGlyphs">Подраздел 2. Временно действующие государственные сметные нормативы</text>

<text x="47" y="755" class="c m">1</text>
<text x="81" y="711" class="c" textLength="352" lengthAdjust="spacingAndGlyphs">Методические указания по разработке сборников</text>
<text x="81" y="733" class="c" textLength="313" lengthAdjust="spacingAndGlyphs">(каталогов) сметных цен на материалы, изделия,</text>
<text x="81" y="755" class="c" textLength="367" lengthAdjust="spacingAndGlyphs">конструкции и сборников сметных цен на перевозку</text>
<text x="81" y="777" class="c" textLength="353" lengthAdjust="spacingAndGlyphs">грузов для строительства и капитального ремонта</text>
<text x="81" y="799" class="c" textLength="261" lengthAdjust="spacingAndGlyphs">зданий и сооружений (МДС 81-2.99)</text>
<text x="691.500" y="755" class="c m" textLength="151" lengthAdjust="spacingAndGlyphs">от 03.12.2010 № 134</text>
<text x="906" y="744" class="c s m" textLength="242" lengthAdjust="spacingAndGlyphs">Постановление Госстроя России от</text><text x="906" y="765" class="c s m" textLength="110" lengthAdjust="spacingAndGlyphs">17.12.1999 № 80</text>

<text x="47" y="843" class="c m">2</text>
<text x="81" y="821" class="c" textLength="390" lengthAdjust="spacingAndGlyphs">Методические указания по разработке сметных норм и</text>
<text x="81" y="843" class="c" textLength="349" lengthAdjust="spacingAndGlyphs">расценок на эксплуатацию строительных машин и</text>
<text x="81" y="865" class="c" textLength="301" lengthAdjust="spacingAndGlyphs">автотранспортных средств (МДС 81-3.99)</text>
<text x="691.500" y="843" class="c m" textLength="151" lengthAdjust="spacingAndGlyphs">от 03.12.2010 № 135</text>
<text x="906" y="832" class="c s m" textLength="242" lengthAdjust="spacingAndGlyphs">Постановление Госстроя России от</text><text x="906" y="853" class="c s m" textLength="110" lengthAdjust="spacingAndGlyphs">17.12.1999 № 81</text>

<text x="47" y="920" class="c m">3</text>
<text x="81" y="887" class="c" textLength="327" lengthAdjust="spacingAndGlyphs">Методические указания о порядке разработки</text>
<text x="81" y="909" class="c" textLength="334" lengthAdjust="spacingAndGlyphs">государственных элементных сметных норм на</text>
<text x="81" y="931" class="c" textLength="398" lengthAdjust="spacingAndGlyphs">строительные, монтажные, специальные строительные и</text>
<text x="81" y="953" class="c" textLength="320" lengthAdjust="spacingAndGlyphs">пусконаладочные работы (МДС 81-19.2000)</text>
<text x="691.500" y="920" class="c m" textLength="151" lengthAdjust="spacingAndGlyphs">от 03.12.2010 № 136</text>
<text x="906" y="909" class="c s m" textLength="242" lengthAdjust="spacingAndGlyphs">Постановление Госстроя России от</text><text x="906" y="930" class="c s m" textLength="133" lengthAdjust="spacingAndGlyphs">24.04.1998 № 18-40</text>
<!-- selection / page breaks -->
<path d="M26.500 188V947" stroke="#0000cc"/>
<rect x="1251" y="168" width="3" height="780" fill="#0000cc"/>
<rect x="1254" y="168" width="7" height="780" fill="#a0a0a0"/>
<path d="M27 473H68M484 473H1251" stroke="#0000cc" stroke-width="2" stroke-dasharray="6 2"/>
<rect x="69.500" y="320.500" width="414" height="152" fill="none" stroke="#fff"/>
<rect x="70.500" y="321.500" width="412" height="150" fill="none" stroke="#000"/>
<path d="M68 473H484" stroke="#ffff00" stroke-width="2"/><path d="M68 473H484" stroke="#000" stroke-width="2" stroke-dasharray="3 3"/>
<rect x="482.500" y="471.500" width="4" height="4" fill="#ffff00" stroke="#000"/>
<!-- watermark -->
<text x="433" y="825" style="font:72px 'Liberation Sans','Noto Sans CJK SC',sans-serif;fill:#7a7a7a;fill-opacity:.82" textLength="412">Страница 15</text>
<!-- red ink -->
<path d="M0 323L12 314L20 310L39 307H284L298 307L322 300L343 290H367L375 293H588L608 295L628 299L640 299L1020 301L1032 305L1089 315L1162 325L1195 337L1211 347L1224 363L1230 387L1228 420L1230 457L1231 503L1234 527L1233 580L1228 597L1227 615L1220 617L1209 633L1197 650L1179 656H1089L1048 647L1032 643L975 636L926 640L869 650L811 660L787 667H738L693 672L640 682L604 687L530 695L469 697L408 692L278 693L253 689H159L139 685L53 672L24 668L10 658L7 547L6 513L0 473" fill="none" stroke="#ed1c24" stroke-width="2.700" stroke-linejoin="round" stroke-linecap="round"/>
<path d="M284 311L298 307" stroke="#ed1c24" stroke-width="2.700"/>
<!-- v scroll -->
<rect x="1261" y="168" width="19" height="794" fill="#7597c2"/>
<rect x="1261" y="168" width="15" height="20" fill="#7ea0cc"/>
<rect x="1276" y="168" width="4" height="794" fill="#b2cff2"/>
<rect x="1262.500" y="169.500" width="13" height="6" fill="#e9f1fb" stroke="#7f93aa"/>
<polygon points="1263,187 1273,187 1268,181" fill="#3c4f70"/>
<rect x="1262.500" y="792.500" width="13" height="75" fill="url(#thv)" stroke="#44587a"/>
<path d="M1265 826.500H1273M1265 828.500H1273M1265 830.500H1273M1265 832.500H1273" stroke="#7a8598"/>
<polygon points="1264,935 1273,935 1268.500,940" fill="#3c4f70"/>
<!-- TAB BAR -->
<rect x="0" y="947" width="1280" height="15" fill="#c8dbf3"/>
<rect x="763" y="947" width="497" height="15" fill="#7597c2"/>
<rect x="1260" y="947" width="16" height="15" fill="#7fa0cc"/>
<g fill="#2c4a78"><polygon points="9,950 9,958 5,954"/><rect x="3" y="950" width="1" height="8"/><polygon points="26,950 26,958 22,954"/><polygon points="36,950 36,958 40,954"/><polygon points="51,950 51,958 55,954"/><rect x="56" y="950" width="1" height="8"/></g>
<path d="M62 947.500H755" stroke="#6d8cb2"/>
<path d="M64 947.500V961.500H100L110 947.500Z" fill="#fff" stroke="#6d8cb2"/>
<g fill="none" stroke="#8ba6c8"><path d="M100 961.500H146L155 947.500"/><path d="M146 961.500H188L192 947.500"/><path d="M188 961.500H228L238 947.500"/><path d="M228 961.500H360L372 947.500"/><path d="M360 961.500H590L600 947.500"/></g>
<text x="85" y="959" class="u m" style="font-weight:bold;font-size:12px" textLength="24" lengthAdjust="spacingAndGlyphs">ГСН</text>
<text x="125" y="959" class="u m" style="font-size:11.500px" textLength="24">ОСН</text>
<text x="169" y="959" class="u m" style="font-size:11.500px" textLength="21">ТЕР</text>
<text x="208" y="959" class="u m" style="font-size:11.500px" textLength="22">ИСН</text>
<text x="297" y="959" class="u m" style="font-size:11.500px" textLength="108" lengthAdjust="spacingAndGlyphs">прочие документы</text>
<text x="480" y="959" class="u m" style="font-size:11.500px" textLength="191" lengthAdjust="spacingAndGlyphs">ТЕР (без средств фед. бюджета)</text>
<text x="610" y="959" class="u" style="font-size:11.500px" textLength="146" lengthAdjust="spacingAndGlyphs">Информация по субъекта</text>
<rect x="757.500" y="948.500" width="5" height="12" fill="#f1f5fb" stroke="#7f93aa"/>
<polygon points="774,950 774,958 769,954" fill="#3c4f70"/>
<rect x="781.500" y="948.500" width="131" height="12" fill="url(#thm)" stroke="#44587a"/>
<path d="M843.500 951V958M845.500 951V958M847.500 951V958M849.500 951V958" stroke="#7a8598"/>
<polygon points="1241,950 1241,958 1246,954" fill="#3c4f70"/>
<rect x="1253.500" y="948.500" width="5" height="12" fill="#f1f5fb" stroke="#7f93aa"/>
<!-- STATUS -->
<rect y="962" width="1280" height="22" fill="url(#st)"/>
<path d="M54.500 963V984M1035.500 963V984" stroke="#8eabcf"/>
<text x="7" y="977" class="u" style="fill:#1f3a5f" textLength="37" lengthAdjust="spacingAndGlyphs">Готово</text>
<rect x="1040.500" y="964.500" width="56" height="17" rx="3" fill="#dce8f7" stroke="#9ab6d8"/>
<rect x="1074" y="965" width="22" height="16" fill="url(#or)"/>
<g shape-rendering="crispEdges"><rect x="1044" y="967" width="14" height="12" fill="#f3f6fa" stroke="#5f6e80"/><path d="M1044 971H1058M1044 975H1058M1049 967V979M1053 967V979" stroke="#5f6e80"/>
<rect x="1062" y="966" width="12" height="14" fill="#c3cad4" stroke="#5f6e80"/><rect x="1065" y="968" width="6" height="10" fill="#f3f6fa" stroke="#5f6e80"/>
<rect x="1078" y="966" width="14" height="13" fill="#f3f6fa" stroke="#5f6e80"/><path d="M1085 966V974" stroke="#5f6e80"/></g>
<text x="1105" y="977" class="u" style="fill:#1b2f80;font-size:12px" textLength="28" lengthAdjust="spacingAndGlyphs">100%</text>
<path d="M1156 973.500H1260" stroke="#f1f6fc"/>
<circle cx="1148" cy="973" r="7.500" fill="#dbe7f6" stroke="#4a6286"/><path d="M1144 973H1152" stroke="#2f4568" stroke-width="2"/>
<circle cx="1267" cy="973" r="7.500" fill="#dbe7f6" stroke="#4a6286"/><path d="M1263 973H1271M1267 969V977" stroke="#2f4568" stroke-width="2"/>
<path d="M1204 967H1211V975L1207.500 979L1204 975Z" fill="#eef3fa" stroke="#4a6286"/>
<!-- TASKBAR -->
<rect y="984" width="1280" height="40" fill="url(#tk)"/>
<path d="M0 984.500H1280" stroke="#3d5066"/>
<g fill="url(#tbn)" stroke="#4f6177"><rect x="184.500" y="986.500" width="58" height="38" rx="3"/><rect x="246.500" y="986.500" width="58" height="38" rx="3"/><rect x="308.500" y="986.500" width="58" height="38" rx="3"/><rect x="369.500" y="986.500" width="59" height="38" rx="3"/><rect x="431.500" y="986.500" width="51" height="38" rx="3"/><rect x="493.500" y="986.500" width="52" height="38" rx="3"/><rect x="556.500" y="986.500" width="58" height="38" rx="3"/><rect x="617.500" y="986.500" width="60" height="38" rx="3"/></g>
<circle cx="26" cy="1005" r="18.500" fill="url(#orb)" stroke="#16324d"/>
<path d="M17 997Q21 995 25 998L24 1004Q20 1002 16 1004Z" fill="#e8532c"/><path d="M27 998Q31 1001 35 998L34 1004Q30 1006 26 1004Z" fill="#8cc63e"/><path d="M16 1006Q20 1004 24 1006L23 1012Q19 1010 15 1012Z" fill="#3aa0e0"/><path d="M26 1006Q30 1008 34 1006L33 1012Q29 1014 25 1012Z" fill="#f5c12e"/>
<!-- media -->
<rect x="77" y="993" width="17" height="25" fill="#7eb0dc" stroke="#4a86bb"/><circle cx="85" cy="1005" r="9" fill="#f08a26" stroke="#fff" stroke-width="2"/><polygon points="82,999 82,1011 91,1005" fill="#fff"/>
<!-- excel -->
<polygon points="136,994 153,990 153,1019 136,1016" fill="#1f7a3d"/><rect x="153.500" y="994.500" width="12" height="22" fill="#fff" stroke="#1f7a3d"/><path d="M153 999.500H166M153 1004.500H166M153 1009.500H166M159.500 994V1017" stroke="#1f7a3d"/>
<text x="144" y="1010" class="m" style="font:bold 14px 'Liberation Sans',sans-serif;fill:#fff">X</text>
<!-- folder -->
<path d="M198 996H210L213 992H228V1018H198Z" fill="url(#fold)" stroke="#b08c3e"/><rect x="202" y="988" width="4" height="3" fill="#39a64b"/><rect x="218" y="994" width="6" height="3" fill="#5f9fe0"/>
<path d="M204 1020V1012Q213 1006 222 1012V1020" fill="#a5c8ea" stroke="#5f90c2" stroke-width="2"/>
<!-- thunderbird -->
<circle cx="276" cy="1005" r="15" fill="#1f5f9e"/><circle cx="279" cy="1005" r="9.500" fill="#5b9bd8"/>
<path d="M262 999Q270 988 284 990Q272 993 270 1000Z" fill="#7fb8e8"/>
<path d="M263 1006L275 1000L287 1007L279 1017L268 1014Z" fill="#ecebe6" stroke="#666"/><path d="M263 1006L276 1010L287 1007" fill="none" stroke="#777"/>
<path d="M266 1000Q272 994 279 997L274 1002Z" fill="#28374f"/>
<!-- blocks -->
<g stroke="#eef3f9" stroke-width=".6"><rect x="321" y="988" width="9" height="8" fill="#e4694a"/><rect x="329" y="993" width="9" height="8" fill="#e4694a"/><rect x="338" y="993" width="8" height="8" fill="#e4694a"/><rect x="323" y="1001" width="6" height="15" fill="#3f78c8"/><rect x="329" y="1001" width="9" height="8" fill="#e4694a"/><rect x="338" y="1001" width="8" height="8" fill="#4f88d8"/><rect x="329" y="1009" width="9" height="8" fill="#3f78c8"/><rect x="338" y="1009" width="8" height="9" fill="#4f88d8"/><rect x="346" y="1011" width="8" height="8" fill="#4f88d8"/></g>
<!-- firefox -->
<circle cx="401" cy="1003" r="13" fill="#2f6fb8"/><path d="M395 990Q410 987 414 1001Q412 992 403 993Z" fill="#f6c23a"/>
<path d="M388 993Q381 1010 392 1018Q404 1024 412 1014Q417 1008 414 1003Q411 1012 401 1012Q392 1010 394 1003Q402 1004 403 1000Q397 997 399 991Q392 993 392 998Q390 996 388 993Z" fill="#e9682a"/>
<!-- word -->
<polygon points="442,993 460,989 460,1019 442,1016" fill="#2b5796"/><rect x="460.500" y="993.500" width="11" height="22" fill="#fff" stroke="#2b5796"/><path d="M460 998.500H472M460 1003.500H472M460 1008.500H472" stroke="#2b5796"/>
<text x="451" y="1010" class="m" style="font:bold 14px 'Liberation Sans',sans-serif;fill:#fff">W</text>
<!-- acrobat -->
<rect x="505" y="989" width="29" height="30" rx="2" fill="#b51218" stroke="#7c0a0e"/><path d="M510 1013Q519 1003 520 992Q523 1005 530 1009Q518 1006 510 1013Z" fill="none" stroke="#fff" stroke-width="1.500"/>
<!-- image -->
<rect x="571" y="993" width="28" height="24" fill="#7fb9d9" stroke="#3f88b3" stroke-width="2"/><path d="M573 1007Q583 1000 597 1006V1016H573Z" fill="#4d8f55"/>
<!-- excel 2 -->
<rect x="633" y="990" width="28" height="28" rx="2" fill="#f1f5ea" stroke="#6d9a4a"/><path d="M640 1000H660M640 1006H660M640 1012H660M648 1000V1017M654 1000V1017" stroke="#5d9a4a" stroke-width="2"/><text x="640" y="1006" class="m" style="font:bold 15px 'Liberation Sans',sans-serif;fill:#1c6b2c">X</text>
<!-- tray -->
<text x="1122" y="1006" class="w">RU</text>
<polygon points="1146,1008 1154,1008 1150,1003" fill="#f4f7fb"/>
<circle cx="1172" cy="1005" r="6.500" fill="#6fb33a"/><circle cx="1176" cy="1009" r="5" fill="#d92a2a" stroke="#fff"/><path d="M1174 1007L1178 1011M1178 1007L1174 1011" stroke="#fff"/>
<text x="1227" y="1001" class="w">12:24</text>
<text x="1226" y="1018" class="w">19.11.2014</text>
<rect x="1266.500" y="986.500" width="13" height="38" fill="#6f8197" stroke="#46576b"/>
</svg>
</body></html>
